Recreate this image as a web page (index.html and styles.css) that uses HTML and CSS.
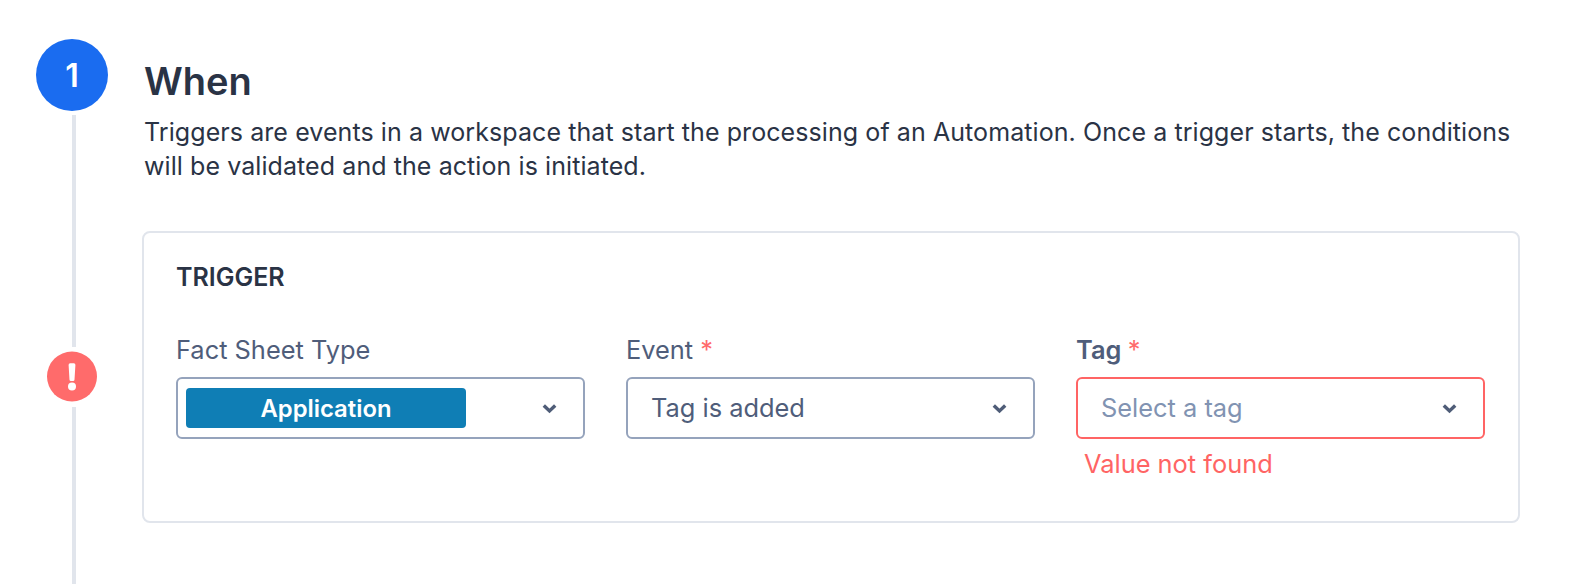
FILE: index.html
```html
<!DOCTYPE html>
<html lang="en">
<head>
<meta charset="utf-8">
<title>Automation trigger</title>
<link rel="stylesheet" href="styles.css">
</head>
<body>
<main class="step">
  <aside class="rail">
    <div class="step-num">1</div>
    <div class="line line-a"></div>
    <svg class="err-icon" width="50" height="51" viewBox="0 0 50 51" aria-hidden="true">
      <circle cx="25" cy="25.5" r="25" fill="#ff6b6b"/>
      <path d="M21.6 14a1.6 1.6 0 0 1 1.6-1.7h3.6a1.6 1.6 0 0 1 1.6 1.7l-.9 14.7a1.5 1.5 0 0 1-1.5 1.4h-2a1.5 1.5 0 0 1-1.5-1.4z" fill="#fff"/>
      <circle cx="25" cy="35.5" r="4" fill="#fff"/>
    </svg>
    <div class="line line-b"></div>
  </aside>
  <section class="content">
    <h1 class="title">When</h1>
    <p class="desc">Triggers are events in a workspace that start the processing of an Automation. Once a trigger starts, the conditions will be validated and the action is initiated.</p>
    <div class="card">
      <h2 class="card-title">TRIGGER</h2>
      <div class="fields">
        <div class="field">
          <div class="label">Fact Sheet Type</div>
          <div class="select">
            <span class="pill">Application</span>
            <svg class="chev" width="15" height="11" viewBox="0 0 15 11" aria-hidden="true"><path d="M1.800 2.500l5.700 5.500 5.700-5.500" fill="none" stroke="#4f5d78" stroke-width="3.400"/></svg>
          </div>
        </div>
        <div class="field">
          <div class="label">Event <span class="req">*</span></div>
          <div class="select select-text">
            <span class="value">Tag is added</span>
            <svg class="chev" width="15" height="11" viewBox="0 0 15 11" aria-hidden="true"><path d="M1.800 2.500l5.700 5.500 5.700-5.500" fill="none" stroke="#4f5d78" stroke-width="3.400"/></svg>
          </div>
        </div>
        <div class="field">
          <div class="label label-err">Tag <span class="req">*</span></div>
          <div class="select select-text select-err">
            <span class="placeholder">Select a tag</span>
            <svg class="chev" width="15" height="11" viewBox="0 0 15 11" aria-hidden="true"><path d="M1.800 2.500l5.700 5.500 5.700-5.500" fill="none" stroke="#4f5d78" stroke-width="3.400"/></svg>
          </div>
          <div class="error">Value not found</div>
        </div>
      </div>
    </div>
  </section>
</main>
</body>
</html>
```

FILE: styles.css
```css
* { box-sizing: border-box; }
html, body { margin: 0; height: 584px; overflow: hidden; background: #fff; }
body { font-family: Inter, "Liberation Sans", sans-serif; color: #2a3345; }
.step { display: flex; height: 584px; padding: 39px 54px 0 36px; }
.rail { width: 72px; flex: none; display: flex; flex-direction: column; align-items: center; margin-right: 34px; }
.step-num { width: 72px; height: 72px; flex: none; border-radius: 50%; background: #1a6cf0; color: #fff; font-size: 32px; font-weight: 600; display: flex; align-items: center; justify-content: center; }
.line { width: 4px; background: #e1e5ec; flex: none; margin-left: 4px; }
.line-a { margin-top: 4px; height: 232px; }
.err-icon { flex: none; margin-top: 4px; }
.line-b { margin-top: 5px; flex: 1; }
.content { flex: 1; min-width: 0; }
.title { margin: 20px 0 0 2px; font-size: 38px; line-height: 44px; font-weight: 600; color: #2a3345; }
.desc { margin: 12px 0 0 2px; font-size: 25px; line-height: 34px; letter-spacing: 0.08px; color: #2a3345; }
.card { margin-top: 48px; height: 292px; border: 2px solid #e1e5ec; border-radius: 8px; padding: 30px 32px; }
.card-title { margin: 0; font-size: 25px; line-height: 28px; font-weight: 600; color: #2a3345; }
.fields { display: grid; grid-template-columns: repeat(3, 409px); column-gap: 41px; margin-top: 43px; }
.label { font-size: 25.4px; line-height: 32px; color: #4f5d7a; margin-bottom: 11px; }
.label-err { font-weight: 600; }
.req { color: #ff6b6b; font-weight: 400; }
.select { height: 62px; border: 2px solid #95a3bc; border-radius: 6px; display: flex; align-items: center; justify-content: space-between; padding: 0 26px 0 8px; }
.select-text { padding-left: 23px; }
.select-err { border-color: #ff6464; }
.pill { width: 280px; height: 40px; background: #0f7eb5; border-radius: 4px; color: #fff; font-size: 23.8px; font-weight: 600; display: flex; align-items: center; justify-content: center; }
.value { font-size: 25.4px; color: #4f5d7a; padding-bottom: 2px; }
.placeholder { font-size: 25.4px; color: #8193b2; padding-bottom: 2px; }
.error { margin: 9px 0 0 8px; font-size: 25.4px; line-height: 32px; color: #ff6464; }
.chev { flex: none; }
```
